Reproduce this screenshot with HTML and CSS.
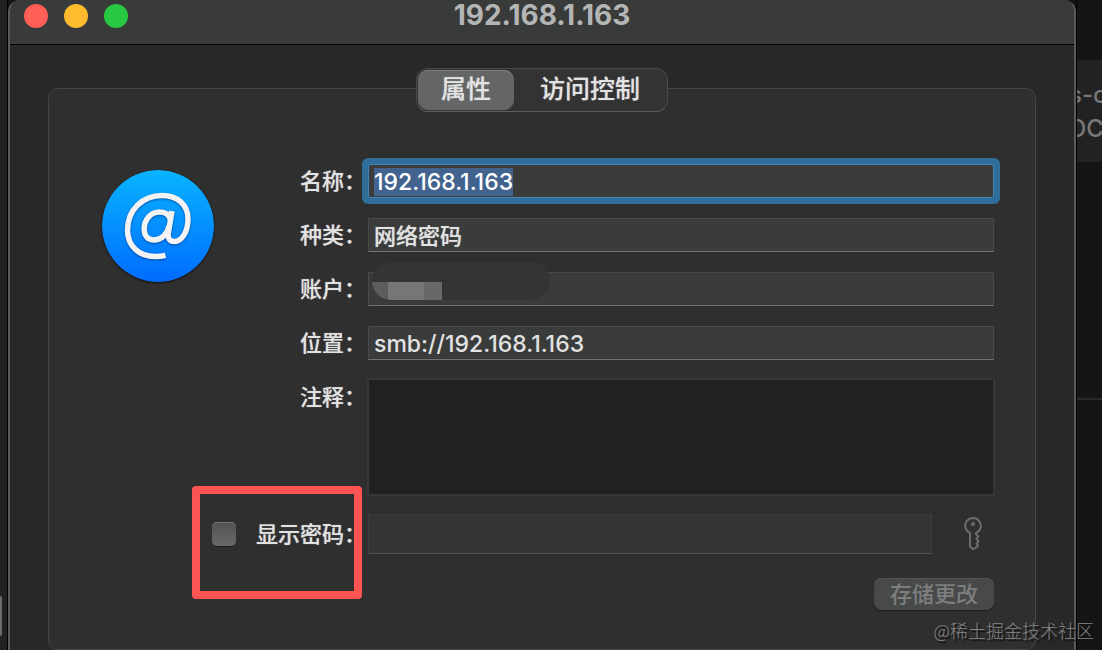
FILE: index.html
```html
<!DOCTYPE html>
<html lang="zh-CN">
<head>
    <meta charset="UTF-8">
    <meta name="viewport" content="width=device-width, initial-scale=1.0">
    <title>192.168.1.163</title>
    <link rel="stylesheet" href="styles.css">
</head>
<body>
    <aside class="desktop-left">
        <div class="scroll-thumb"></div>
    </aside>

    <div class="window">
        <header class="title-bar">
            <div class="lights">
                <button class="light close" aria-label="关闭"></button>
                <button class="light minimize" aria-label="最小化"></button>
                <button class="light zoom" aria-label="缩放"></button>
            </div>
            <h1>192.168.1.163</h1>
        </header>

        <main>
            <div class="tabs">
                <button class="tab active">属性</button>
                <button class="tab">访问控制</button>
            </div>

            <form class="panel">
                <svg class="at-icon" viewBox="0 0 112 112" aria-hidden="true">
                    <defs>
                        <linearGradient id="blue" x1="0" y1="0" x2="0" y2="1">
                            <stop offset="0" stop-color="#08b4ff"/>
                            <stop offset="1" stop-color="#006cff"/>
                        </linearGradient>
                    </defs>
                    <circle cx="56" cy="56" r="56" fill="url(#blue)"/>
                    <g class="at-sign">
                        <path d="M63.5 85.3C60 86.2 56 86.5 53 86.5C37 86.5 25.5 76 25.5 60C25.5 40 40.5 25.5 60 25.5C76 25.5 86 35 86 49C86 62 79.5 71.5 72.5 71.5C67.5 71.5 65.5 68 66.3 63L70 41"/>
                        <path d="M68.5 50C67.5 45 63.5 42 57.5 42C48.5 42 42.2 50 42.2 59C42.2 66 46 70 52.2 70C59.5 70 65.5 64 67 56"/>
                    </g>
                </svg>

                <label class="label" for="name">名称：</label>
                <input class="field focused" id="name" type="text" value="192.168.1.163">

                <label class="label" for="kind">种类：</label>
                <input class="field kind" id="kind" type="text" value="网络密码" readonly>

                <label class="label" for="account">账户：</label>
                <div class="account">
                    <input class="field" id="account" type="text">
                    <div class="mask">
                        <div class="mosaic"><i></i><i></i><i></i><i></i></div>
                    </div>
                </div>

                <label class="label" for="location">位置：</label>
                <input class="field" id="location" type="text" value="smb://192.168.1.163">

                <label class="label" for="comment">注释：</label>
                <textarea class="comment" id="comment"></textarea>

                <div class="show-password">
                    <input class="checkbox" id="show" type="checkbox">
                    <label for="show">显示密码：</label>
                    <div class="highlight"></div>
                </div>
                <div class="password-row">
                    <input class="password" type="password" aria-label="密码" disabled>
                    <button class="key" type="button" aria-label="密码助理">
                        <svg viewBox="0 0 18 34">
                            <path d="M6 16A7.8 7.8 0 1 1 12 16V17.2L14.4 19.6L12.4 22L14.6 24.4L12.6 26.6L14.2 28.8L9.4 32.2L6 29.6Z"/>
                            <circle cx="9" cy="7" r="2"/>
                        </svg>
                    </button>
                </div>

                <button class="save" type="submit" disabled>存储更改</button>
            </form>
        </main>
    </div>

    <aside class="desktop-right">
        <div class="note">
            <p>s-c</p>
            <p>DC</p>
        </div>
        <div class="divider"></div>
    </aside>

    <div class="watermark">@稀土掘金技术社区</div>

    <script>
        // Start with the item name selected
        const nameField = document.getElementById('name');
        nameField.focus();
        nameField.select();
    </script>
</body>
</html>
```

FILE: styles.css
```css
* {
    box-sizing: border-box;
}

body {
    margin: 0;
    height: 100vh;
    display: grid;
    grid-template-columns: 8px 1fr 26px;
    position: relative;
    overflow: hidden;
    background: #151515;
    color: #e2e2e2;
    font-family: Inter, "Noto Sans CJK SC", sans-serif;
    font-size: 22px;
    font-weight: 500;
}

button,
input,
textarea {
    font: inherit;
    color: inherit;
    margin: 0;
    padding: 0;
    border: none;
    outline: none;
}

/* Desktop behind the window */
.desktop-left {
    display: flex;
    align-items: flex-end;
    padding-bottom: 14px;
    background: #1f2221;
    border-right: 1px solid #000;
}

.scroll-thumb {
    width: 2px;
    height: 40px;
    background: #6c6e6d;
    border-radius: 0 2px 2px 0;
}

.desktop-right {
    padding-top: 60px;
    overflow: hidden;
    border-left: 1px solid #000;
}

.note {
    height: 102px;
    padding-top: 18px;
    background: #222;
    color: #777;
    font-size: 24px;
    line-height: 34px;
}

.note p {
    margin: 0 0 0 -8px;
    white-space: nowrap;
}

.divider {
    height: 2px;
    margin-top: 236px;
    background: #2a2a2a;
}

/* Window */
.window {
    display: flex;
    flex-direction: column;
    min-height: 0;
    background: #282828;
    border: 2px solid #5a5a5a;
    border-width: 0 2px;
    border-radius: 12px 12px 0 0;
    overflow: hidden;
}

.title-bar {
    flex: none;
    display: grid;
    grid-template-columns: 1fr auto 1fr;
    height: 45px;
    padding: 0 14px;
    background: #393b3a;
    border-bottom: 1px solid #000;
}

.title-bar h1 {
    margin: 0;
    color: #b4b5b5;
    font-size: 28px;
    font-weight: 700;
    line-height: 30px;
}

.lights {
    display: flex;
    gap: 16px;
    padding-top: 4px;
}

.light {
    width: 24px;
    height: 24px;
    border-radius: 50%;
}

.close {
    background: #ff5f57;
}

.minimize {
    background: #febc2e;
}

.zoom {
    background: #28c840;
}

main {
    flex: 1;
    display: flex;
    flex-direction: column;
    padding: 23px 38px 0;
}

.tabs {
    align-self: center;
    display: flex;
    z-index: 1;
    height: 44px;
    padding: 1px;
    background: #333;
    border: 1px solid #4a4a4a;
    border-bottom-color: #5c5c5c;
    border-radius: 12px;
}

.tab {
    padding: 0 26px 2px;
    background: none;
    border-radius: 10px;
    font-size: 25px;
    line-height: 36px;
}

.tab.active {
    padding: 0 23px 2px;
    background: #646665;
    box-shadow: inset 0 1px #7d7f7e;
}

.tab,
.label,
.kind,
.show-password label {
    text-shadow: 0 0 1px rgba(226, 226, 226, 0.6);
}

.panel {
    flex: 1;
    display: grid;
    grid-template-columns: 266px 1fr;
    grid-auto-rows: max-content;
    row-gap: 20px;
    margin-top: -24px;
    padding: 75px 41px 0 53px;
    background: #2f2f2f;
    border: 1px solid #454545;
    border-radius: 10px;
}

.at-icon {
    grid-column: 1;
    grid-row: 1 / 4;
    width: 112px;
    height: 112px;
    margin-top: 6px;
    border-radius: 50%;
    box-shadow: 0 1px 2px #111;
}

.at-sign {
    fill: none;
    stroke: #f3f3f3;
    stroke-width: 5.5;
    filter: drop-shadow(0 1px 1px rgba(0, 40, 110, 0.6));
}

.label {
    grid-column: 1;
    justify-self: end;
    padding-right: 2px;
    line-height: 34px;
}

.panel > .label:nth-of-type(1) {
    grid-row: 1;
}

.panel > .label:nth-of-type(2) {
    grid-row: 2;
}

.panel > .label:nth-of-type(3) {
    grid-row: 3;
}

.field {
    display: block;
    width: 100%;
    height: 34px;
    padding: 1px 5px 0;
    background: #3a3c3b;
    border: 1px solid #484a49;
    border-bottom-color: #727272;
    font-size: 23px;
}

.field.kind {
    padding: 0 5px 2px;
    font-size: 22px;
}

.field.focused {
    border-color: #4386b5;
    box-shadow: 0 0 0 6px #2f6d9b;
    border-radius: 2px;
}

.field::selection {
    background: #41638e;
    color: #fff;
}

.account {
    position: relative;
}

/* Hides the account name */
.mask {
    position: absolute;
    top: -10px;
    left: 4px;
    width: 178px;
    height: 38px;
    padding-top: 20px;
    background: #343434;
    border-radius: 19px;
    overflow: hidden;
}

.mosaic {
    display: flex;
    height: 18px;
}

.mosaic i {
    width: 18px;
    background: #757776;
}

.mosaic i:first-child {
    width: 16px;
    background: #5c5c5c;
}

.mosaic i:last-child {
    background: #686868;
}

.comment {
    display: block;
    height: 118px;
    margin: -2px -1px;
    padding: 4px;
    background: #202221;
    border: 2px solid #363837;
    resize: none;
}

.show-password {
    grid-column: 1;
    justify-self: end;
    position: relative;
    display: flex;
    align-items: center;
    gap: 20px;
    padding-right: 2px;
    line-height: 34px;
}

.checkbox {
    appearance: none;
    width: 24px;
    height: 24px;
    background: linear-gradient(#515151, #6a6a6a);
    border-radius: 5px;
    box-shadow: inset 0 1px #757575, 0 1px 1px #202020;
}

.highlight {
    position: absolute;
    top: -28px;
    left: -20px;
    right: 6px;
    height: 113px;
    border: 8px solid #fc5453;
    border-radius: 4px;
    pointer-events: none;
}

.password-row {
    display: flex;
    align-items: center;
    gap: 32px;
}

.password {
    flex: 1;
    min-width: 0;
    height: 40px;
    background: #333436;
    border: 1px solid #3b3c3d;
    border-bottom-color: #505050;
}

.key {
    width: 18px;
    height: 34px;
    margin-right: 12px;
    background: none;
}

.key svg {
    display: block;
    fill: none;
    stroke: #6c6c6c;
    stroke-width: 2;
    stroke-linejoin: round;
}

.key circle {
    fill: #6c6c6c;
    stroke: none;
}

.save {
    grid-column: 2;
    justify-self: end;
    height: 32px;
    margin-top: 4px;
    padding: 0 16px;
    background: #484a49;
    border-radius: 8px;
    box-shadow: inset 0 1px #535554, 0 1px 1px #222;
    color: #7c7e7d;
    line-height: 32px;
}

.watermark {
    position: absolute;
    right: 8px;
    bottom: 7px;
    color: #858585;
    font-family: "Noto Sans CJK SC", sans-serif;
    font-size: 18px;
    font-weight: 300;
    line-height: 26px;
    text-shadow: 2px 2px 1px #111;
}
```
